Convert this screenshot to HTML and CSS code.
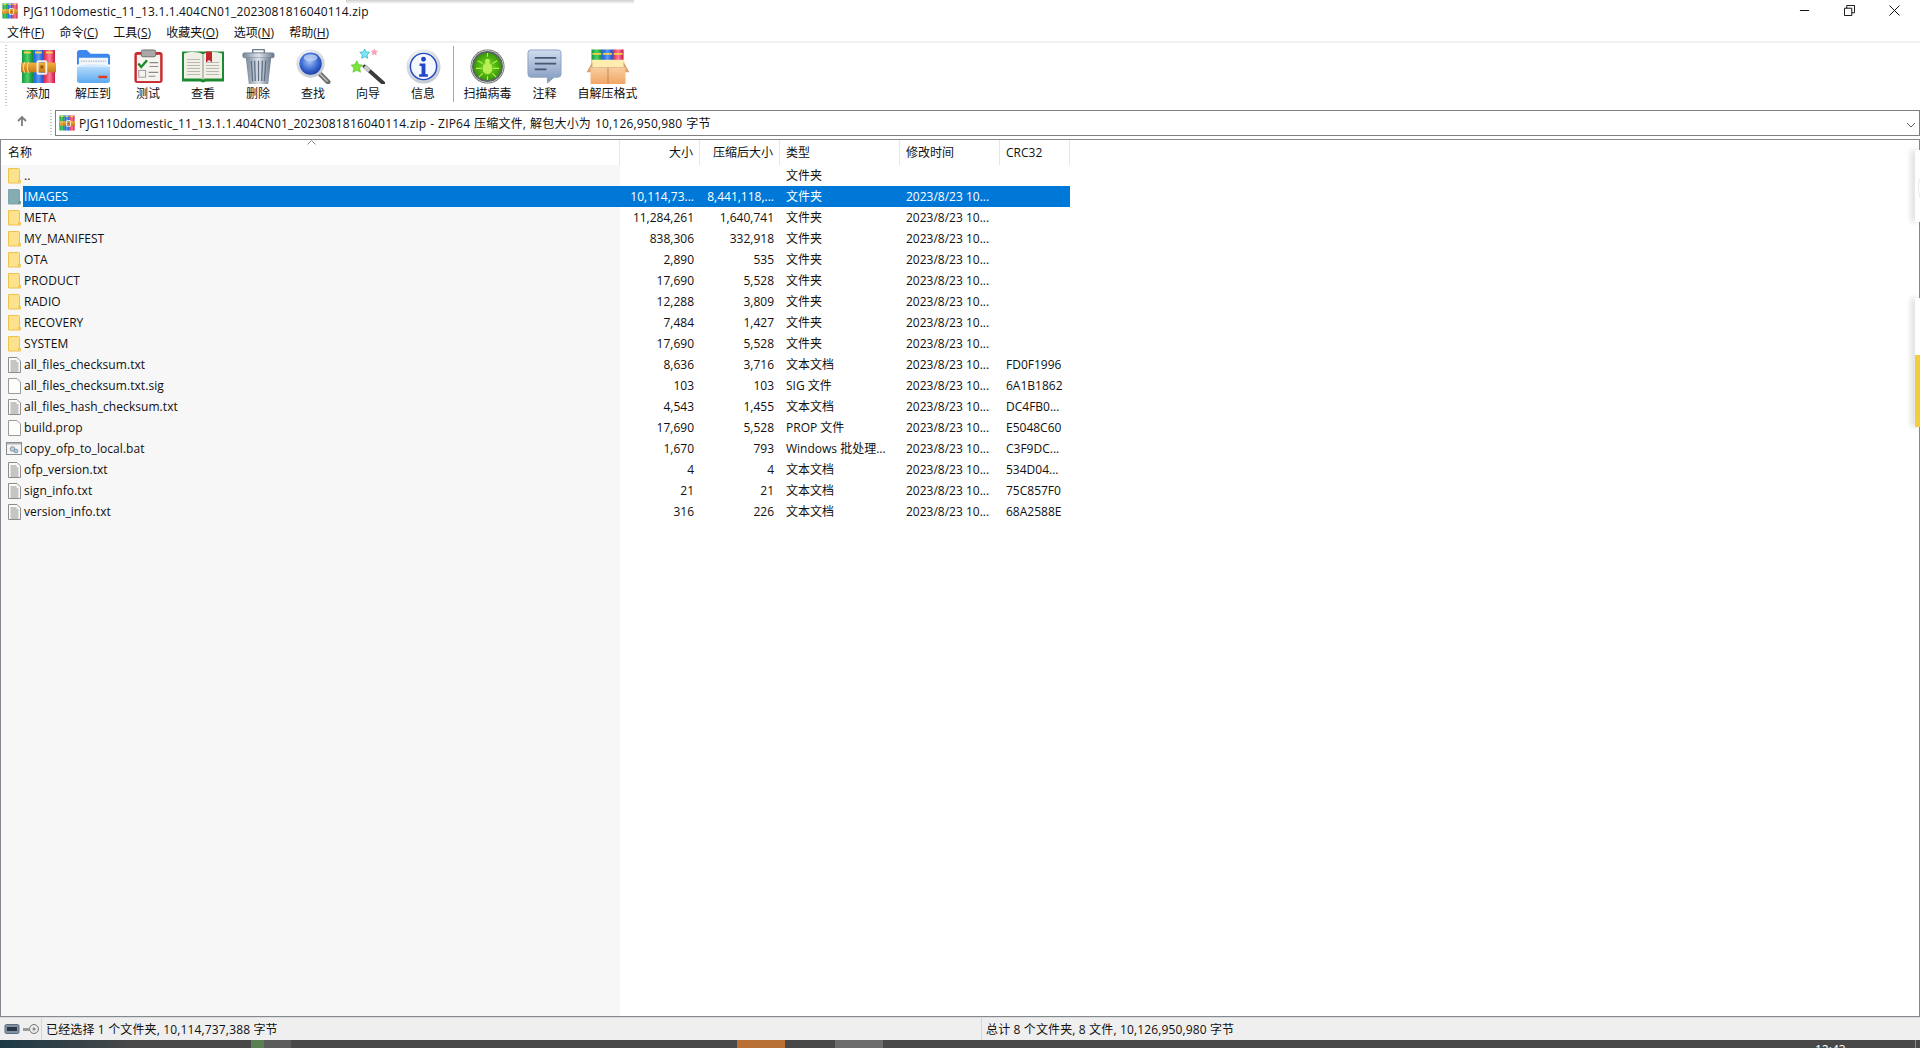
FILE: index.html
```html
<!DOCTYPE html>
<html lang="zh">
<head>
<meta charset="utf-8">
<title>PJG110domestic_11_13.1.1.404CN01_2023081816040114.zip</title>
<link rel="stylesheet" href="styles.css">
</head>
<body>
<svg class="defs" width="0" height="0" aria-hidden="true">
  <defs>
    <linearGradient id="gGreen" x1="0" x2="1" y1="0" y2="0"><stop offset="0" stop-color="#0f9a3c"/><stop offset=".5" stop-color="#4fd06a"/><stop offset="1" stop-color="#0c8a35"/></linearGradient>
    <linearGradient id="gBlue" x1="0" x2="1" y1="0" y2="0"><stop offset="0" stop-color="#1a55d8"/><stop offset=".5" stop-color="#5d9cf5"/><stop offset="1" stop-color="#1743c0"/></linearGradient>
    <linearGradient id="gRed" x1="0" x2="1" y1="0" y2="0"><stop offset="0" stop-color="#d8204a"/><stop offset=".5" stop-color="#ff7d9a"/><stop offset="1" stop-color="#c61540"/></linearGradient>
    <linearGradient id="gBelt" x1="0" x2="0" y1="0" y2="1"><stop offset="0" stop-color="#f2b13c"/><stop offset="1" stop-color="#c87a18"/></linearGradient>
    <linearGradient id="gFolder" x1="0" x2="0" y1="0" y2="1"><stop offset="0" stop-color="#b6dcfb"/><stop offset="1" stop-color="#5aa9ef"/></linearGradient>
    <linearGradient id="gTrash" x1="0" x2="1" y1="0" y2="0"><stop offset="0" stop-color="#77869a"/><stop offset=".5" stop-color="#dfe5ec"/><stop offset="1" stop-color="#69788c"/></linearGradient>
    <radialGradient id="gLens" cx=".45" cy=".4" r=".6"><stop offset="0" stop-color="#a9c4f2"/><stop offset=".6" stop-color="#3f70d6"/><stop offset="1" stop-color="#1d3fa8"/></radialGradient>
    <radialGradient id="gRing" cx=".4" cy=".3" r=".8"><stop offset="0" stop-color="#ffffff"/><stop offset="1" stop-color="#b9c2cc"/></radialGradient>
    <radialGradient id="gBug" cx=".5" cy=".5" r=".55"><stop offset="0" stop-color="#7fe01f"/><stop offset="1" stop-color="#2f9206"/></radialGradient>
    <linearGradient id="gNote" x1="0" x2="0" y1="0" y2="1"><stop offset="0" stop-color="#cfdcee"/><stop offset="1" stop-color="#7f97bd"/></linearGradient>
    <linearGradient id="gBox" x1="0" x2="0" y1="0" y2="1"><stop offset="0" stop-color="#f7cf9f"/><stop offset="1" stop-color="#f2a567"/></linearGradient>

    <symbol id="i-rar" viewBox="0 0 36 36">
      <rect x="1" y="1" width="11.5" height="34" fill="url(#gGreen)"/>
      <rect x="12.5" y="1" width="11" height="34" fill="url(#gBlue)"/>
      <rect x="23.5" y="1" width="11.5" height="34" fill="url(#gRed)"/>
      <path d="M3 2.500h7v2H3zM14.500 2.500h7v2h-7zM25.500 2.500h7v2h-7z" fill="#f4d443"/>
      <rect x="0" y="14" width="36" height="10" fill="url(#gBelt)"/>
      <path d="M4 13.500c-2 3-2 8 0 11M8 13.500c-2 3-2 8 0 11" fill="none" stroke="#fbe6a6" stroke-width="1"/>
      <rect x="17" y="12.500" width="9" height="13" rx="1" fill="none" stroke="#f4f1e4" stroke-width="2"/>
      <rect x="20" y="17" width="3" height="3" fill="#8a5612"/>
    </symbol>

    <symbol id="i-extract" viewBox="0 0 36 36">
      <path d="M1 4a3 3 0 0 1 3-3h7l4 4h17a3 3 0 0 1 3 3v8H1z" fill="#3c86ee"/>
      <rect x="3" y="9" width="30" height="12" fill="#f3f6fa"/>
      <path d="M5 12.500h26" stroke="#b8c2cf" stroke-width="1.500" stroke-dasharray="1.500 1"/>
      <path d="M1 18h34v14a3 3 0 0 1-3 3H4a3 3 0 0 1-3-3z" fill="url(#gFolder)"/>
      <path d="M1 18c8-3 26-3 34 0" fill="#d3ebfd"/>
      <rect x="23" y="27.500" width="9" height="2.500" fill="#e03a20"/>
    </symbol>

    <symbol id="i-test" viewBox="0 0 36 36">
      <rect x="3.500" y="3" width="29" height="32" rx="3" fill="#c9282c"/>
      <rect x="6" y="6" width="24" height="27" fill="#f6f4ef"/>
      <rect x="10.500" y="1" width="15" height="7" rx="2" fill="#a9a9a9" stroke="#6d6d6d"/>
      <path d="M7.500 15l3 3.500 6-7" fill="none" stroke="#1c8a2d" stroke-width="2.500"/>
      <path d="M19 14h9M19 18h9M18 24h10M18 28h7" stroke="#8b8b8b" stroke-width="1.200"/>
      <rect x="8" y="22" width="7" height="7" fill="none" stroke="#9a9a9a"/>
    </symbol>

    <symbol id="i-view" viewBox="0 0 42 32">
      <path d="M0 1h42v30H24l-3 1-3-1H0z" fill="#1c8a32"/>
      <path d="M2 3c7-2 14-2 19 1 5-3 12-3 19-1v25H23l-2 1-2-1H2z" fill="#f1f0e7"/>
      <path d="M5 9h13M5 12h13M5 15h13M5 18h13M5 21h13M5 24h13M24 12h13M24 15h13M24 18h13M24 21h13M24 24h13" stroke="#b9b9b1" stroke-width="1.200"/>
      <path d="M21 4v25" stroke="#8f8f85" stroke-width="1"/>
      <path d="M24 1h6v11l-3-2.500-3 2.500z" fill="#c4242c"/>
    </symbol>

    <symbol id="i-del" viewBox="0 0 36 36">
      <rect x="12" y="0.500" width="12" height="4" rx="1" fill="none" stroke="#6c7a8d" stroke-width="1.500"/>
      <rect x="2" y="4" width="32" height="5" rx="1.500" fill="url(#gTrash)" stroke="#66758a" stroke-width=".8"/>
      <path d="M5 9h26l-3 27H8z" fill="url(#gTrash)"/>
      <path d="M10.500 12l1.500 21M18 12v21M25.500 12L24 33M14 12l.7 21M22 12l-.7 21" stroke="#5f6e83" stroke-width="1.300"/>
    </symbol>

    <symbol id="i-find" viewBox="0 0 36 36">
      <path d="M23 24l10 10" stroke="#6f6f6f" stroke-width="5" stroke-linecap="round"/>
      <path d="M25 26l7 7" stroke="#c4c4c4" stroke-width="1.500" stroke-linecap="round"/>
      <circle cx="15" cy="15" r="14.500" fill="url(#gRing)"/>
      <circle cx="15" cy="15" r="11.500" fill="url(#gLens)"/>
      <ellipse cx="15" cy="9" rx="7" ry="3.500" fill="#c7d9f7" opacity=".7"/>
    </symbol>

    <symbol id="i-wizard" viewBox="0 0 36 36">
      <path d="M14 18l19 17" stroke="#3b3b3b" stroke-width="4" stroke-linecap="round"/>
      <path d="M14 18l5 4.500" stroke="#c9c9c9" stroke-width="4"/>
      <path d="M6 12l2 4 4 .5-3 3 .8 4.500L6 22l-4 2 .8-4.500-3-3 4-.5z" fill="#7be33a" stroke="#4bb81c" stroke-width=".5"/>
      <path d="M14 0l1.500 3 3.500.5-2.500 2.500.6 3.500L14 8l-3 1.500.6-3.500L9 3.500 12.500 3z" fill="#7be6f5" stroke="#2fb6d2" stroke-width=".8"/>
      <path d="M24 0l1 2 2.300.3-1.700 1.600.4 2.300L24 5l-2 1.200.4-2.300L20.700 2.300 23 2z" fill="#f7a6b8" stroke="#e886a0" stroke-width=".4"/>
    </symbol>

    <symbol id="i-info" viewBox="0 0 36 36">
      <circle cx="18" cy="18" r="17.500" fill="url(#gRing)"/>
      <circle cx="18" cy="18" r="13.500" fill="#f5f8fd" stroke="#2446bf" stroke-width="1.500"/>
      <circle cx="18" cy="10.500" r="2.500" fill="#2246c8"/>
      <path d="M14 15h6v11h2.500v2.500h-9V26H16v-8.500h-2z" fill="#2246c8"/>
    </symbol>

    <symbol id="i-scan" viewBox="0 0 36 36">
      <circle cx="18" cy="18" r="17.500" fill="#5d6360"/>
      <circle cx="18" cy="18" r="16.500" fill="none" stroke="#cfd3d0" stroke-width="1"/>
      <circle cx="18" cy="18" r="14" fill="url(#gBug)"/>
      <ellipse cx="18" cy="20" rx="5" ry="6" fill="#b8ef56"/>
      <circle cx="18" cy="12.500" r="2.500" fill="#b8ef56"/>
      <path d="M13 15l-5-3M23 15l5-3M12 20H6M24 20h6M13 25l-4 4M23 25l4 4M18 4v4M18 28v4" stroke="#b8ef56" stroke-width="1.200"/>
    </symbol>

    <symbol id="i-note" viewBox="0 0 36 36">
      <path d="M4 1h28a3 3 0 0 1 3 3v22a3 3 0 0 1-3 3h-4l-7 6v-6H4a3 3 0 0 1-3-3V4a3 3 0 0 1 3-3z" fill="url(#gNote)" stroke="#8ea2c2"/>
      <path d="M8 9h22M8 15h22M8 21h12" stroke="#47556e" stroke-width="1.800"/>
    </symbol>

    <symbol id="i-sfx" viewBox="0 0 44 36">
      <rect x="5" y="0.500" width="11" height="19" fill="url(#gGreen)"/>
      <rect x="16" y="0.500" width="11" height="19" fill="url(#gBlue)"/>
      <rect x="27" y="0.500" width="11" height="19" fill="url(#gRed)"/>
      <path d="M6 4h9v2H6zM17 4h9v2h-9zM28 4h9v2h-9z" fill="#f4d443"/>
      <path d="M5 11h34v8H5z" fill="#fdeeb0"/>
      <path d="M0 24l6-11v6h32v-6l6 11z" fill="#d9a06c"/>
      <rect x="4" y="19" width="36" height="17" fill="url(#gBox)"/>
      <path d="M22 19v17" stroke="#c98548" stroke-width="1"/>
    </symbol>

    <symbol id="i-folder" viewBox="0 0 13 16">
      <path d="M.5.500h10a1 1 0 0 1 1 1v11h1v2.500h-12z" fill="#fde28e" stroke="#eec24d"/>
      <path d="M10 15v-3l2.500 0v3z" fill="#f1cb62"/>
    </symbol>
    <symbol id="i-folder-sel" viewBox="0 0 13 16">
      <path d="M.5.500h10a1 1 0 0 1 1 1v11h1v2.500h-12z" fill="#85acb2" stroke="#7ea6ac"/>
      <path d="M10 15v-3l2.500 0v3z" fill="#6f9c8c"/>
    </symbol>
    <symbol id="i-txt" viewBox="0 0 13 16">
      <path d="M.5.500h8.500l3.500 3.500v11.500h-12z" fill="#fbfbfb" stroke="#8d8d8d"/>
      <path d="M2.500 4h6M2.500 6h8M2.500 8h8M2.500 10h8M2.500 12h8M2.500 14h8" stroke="#8f8f8f" stroke-width="1"/>
    </symbol>
    <symbol id="i-blank" viewBox="0 0 13 16">
      <path d="M.5.500h8.500l3.500 3.500v11.500h-12z" fill="#fdfdfd" stroke="#9a9a9a"/>
    </symbol>
    <symbol id="i-bat" viewBox="0 0 16 13">
      <rect x=".5" y=".5" width="15" height="12" fill="#f4f4f4" stroke="#8b8b8b"/>
      <rect x="1" y="1" width="14" height="1.500" fill="#b5b5b5"/>
      <circle cx="6.500" cy="7" r="2.300" fill="#c4ccd4" stroke="#8a949e"/>
      <circle cx="10" cy="9" r="1.800" fill="#a8cde6" stroke="#6f9cbc"/>
    </symbol>
  </defs>
</svg>

<div class="window">
  <div class="shadow-strip"></div>
  <header class="titlebar">
    <svg class="ico16"><use href="#i-rar"/></svg>
    <span class="title">PJG110domestic_11_13.1.1.404CN01_2023081816040114.zip</span>
    <div class="winbtns">
      <svg class="wb" viewBox="0 0 12 12"><path d="M1 6h10" stroke="#000"/></svg>
      <svg class="wb" viewBox="0 0 12 12"><path d="M.5 3.500h8v8h-8zM3 3.500V.5h8.500v8H8.500" fill="none" stroke="#000"/></svg>
      <svg class="wb" viewBox="0 0 12 12"><path d="M.5.500l11 11M11.500.500l-11 11" stroke="#000"/></svg>
    </div>
  </header>

  <nav class="menubar">
    <span>文件(<u>F</u>)</span><span>命令(<u>C</u>)</span><span>工具(<u>S</u>)</span><span>收藏夹(<u>O</u>)</span><span>选项(<u>N</u>)</span><span>帮助(<u>H</u>)</span>
  </nav>

  <div class="toolbar">
    <div class="grip"></div>
    <div class="tool"><svg class="ticon"><use href="#i-rar"/></svg><span>添加</span></div>
    <div class="tool"><svg class="ticon"><use href="#i-extract"/></svg><span>解压到</span></div>
    <div class="tool"><svg class="ticon"><use href="#i-test"/></svg><span>测试</span></div>
    <div class="tool"><svg class="ticon wide"><use href="#i-view"/></svg><span>查看</span></div>
    <div class="tool"><svg class="ticon"><use href="#i-del"/></svg><span>删除</span></div>
    <div class="tool"><svg class="ticon"><use href="#i-find"/></svg><span>查找</span></div>
    <div class="tool"><svg class="ticon"><use href="#i-wizard"/></svg><span>向导</span></div>
    <div class="tool"><svg class="ticon"><use href="#i-info"/></svg><span>信息</span></div>
    <div class="tsep"></div>
    <div class="tool w-scan"><svg class="ticon"><use href="#i-scan"/></svg><span>扫描病毒</span></div>
    <div class="tool w-note"><svg class="ticon"><use href="#i-note"/></svg><span>注释</span></div>
    <div class="tool w-sfx"><svg class="ticon wider"><use href="#i-sfx"/></svg><span>自解压格式</span></div>
  </div>

  <div class="addrrow">
    <svg class="up" viewBox="0 0 12 12"><path d="M6 11V2M2 6l4-4 4 4" fill="none" stroke="#7d7d7d" stroke-width="1.800"/></svg>
    <div class="grip small"></div>
    <div class="addr">
      <svg class="ico16"><use href="#i-rar"/></svg>
      <span class="addrtext">PJG110domestic_11_13.1.1.404CN01_2023081816040114.zip - ZIP64 压缩文件, 解包大小为 10,126,950,980 字节</span>
      <svg class="chev" viewBox="0 0 10 6"><path d="M1 1l4 4 4-4" fill="none" stroke="#606060"/></svg>
    </div>
  </div>

  <main class="list">
    <div class="row head">
      <div class="c-name">名称<svg class="sort" viewBox="0 0 9 5"><path d="M.5 4.500L4.500.5l4 4" fill="none" stroke="#8a8a8a"/></svg></div>
      <div class="c r">大小</div>
      <div class="c r">压缩后大小</div>
      <div class="c">类型</div>
      <div class="c">修改时间</div>
      <div class="c">CRC32</div>
    </div>
    <div class="rows">
      <div class="row"><svg class="fi"><use href="#i-folder"/></svg><div class="nm">..</div><div class="c r"></div><div class="c r"></div><div class="c">文件夹</div><div class="c"></div><div class="c"></div></div>
      <div class="row sel"><svg class="fi"><use href="#i-folder-sel"/></svg><div class="nm">IMAGES</div><div class="c r">10,114,73...</div><div class="c r">8,441,118,...</div><div class="c">文件夹</div><div class="c">2023/8/23 10...</div><div class="c"></div></div>
      <div class="row"><svg class="fi"><use href="#i-folder"/></svg><div class="nm">META</div><div class="c r">11,284,261</div><div class="c r">1,640,741</div><div class="c">文件夹</div><div class="c">2023/8/23 10...</div><div class="c"></div></div>
      <div class="row"><svg class="fi"><use href="#i-folder"/></svg><div class="nm">MY_MANIFEST</div><div class="c r">838,306</div><div class="c r">332,918</div><div class="c">文件夹</div><div class="c">2023/8/23 10...</div><div class="c"></div></div>
      <div class="row"><svg class="fi"><use href="#i-folder"/></svg><div class="nm">OTA</div><div class="c r">2,890</div><div class="c r">535</div><div class="c">文件夹</div><div class="c">2023/8/23 10...</div><div class="c"></div></div>
      <div class="row"><svg class="fi"><use href="#i-folder"/></svg><div class="nm">PRODUCT</div><div class="c r">17,690</div><div class="c r">5,528</div><div class="c">文件夹</div><div class="c">2023/8/23 10...</div><div class="c"></div></div>
      <div class="row"><svg class="fi"><use href="#i-folder"/></svg><div class="nm">RADIO</div><div class="c r">12,288</div><div class="c r">3,809</div><div class="c">文件夹</div><div class="c">2023/8/23 10...</div><div class="c"></div></div>
      <div class="row"><svg class="fi"><use href="#i-folder"/></svg><div class="nm">RECOVERY</div><div class="c r">7,484</div><div class="c r">1,427</div><div class="c">文件夹</div><div class="c">2023/8/23 10...</div><div class="c"></div></div>
      <div class="row"><svg class="fi"><use href="#i-folder"/></svg><div class="nm">SYSTEM</div><div class="c r">17,690</div><div class="c r">5,528</div><div class="c">文件夹</div><div class="c">2023/8/23 10...</div><div class="c"></div></div>
      <div class="row"><svg class="fi"><use href="#i-txt"/></svg><div class="nm">all_files_checksum.txt</div><div class="c r">8,636</div><div class="c r">3,716</div><div class="c">文本文档</div><div class="c">2023/8/23 10...</div><div class="c">FD0F1996</div></div>
      <div class="row"><svg class="fi"><use href="#i-blank"/></svg><div class="nm">all_files_checksum.txt.sig</div><div class="c r">103</div><div class="c r">103</div><div class="c">SIG 文件</div><div class="c">2023/8/23 10...</div><div class="c">6A1B1862</div></div>
      <div class="row"><svg class="fi"><use href="#i-txt"/></svg><div class="nm">all_files_hash_checksum.txt</div><div class="c r">4,543</div><div class="c r">1,455</div><div class="c">文本文档</div><div class="c">2023/8/23 10...</div><div class="c">DC4FB0...</div></div>
      <div class="row"><svg class="fi"><use href="#i-blank"/></svg><div class="nm">build.prop</div><div class="c r">17,690</div><div class="c r">5,528</div><div class="c">PROP 文件</div><div class="c">2023/8/23 10...</div><div class="c">E5048C60</div></div>
      <div class="row"><svg class="fi bat"><use href="#i-bat"/></svg><div class="nm">copy_ofp_to_local.bat</div><div class="c r">1,670</div><div class="c r">793</div><div class="c">Windows 批处理...</div><div class="c">2023/8/23 10...</div><div class="c">C3F9DC...</div></div>
      <div class="row"><svg class="fi"><use href="#i-txt"/></svg><div class="nm">ofp_version.txt</div><div class="c r">4</div><div class="c r">4</div><div class="c">文本文档</div><div class="c">2023/8/23 10...</div><div class="c">534D04...</div></div>
      <div class="row"><svg class="fi"><use href="#i-txt"/></svg><div class="nm">sign_info.txt</div><div class="c r">21</div><div class="c r">21</div><div class="c">文本文档</div><div class="c">2023/8/23 10...</div><div class="c">75C857F0</div></div>
      <div class="row"><svg class="fi"><use href="#i-txt"/></svg><div class="nm">version_info.txt</div><div class="c r">316</div><div class="c r">226</div><div class="c">文本文档</div><div class="c">2023/8/23 10...</div><div class="c">68A2588E</div></div>
    </div>
    <div class="edge-tab one"><div class="ring"></div></div>
    <div class="edge-tab two"><div class="yellow"></div></div>
  </main>

  <footer class="status">
    <div class="st-icons">
      <svg class="st-i" viewBox="0 0 16 12"><rect x="1" y="1.500" width="14" height="9" rx="1.500" fill="#7f93a8" stroke="#5e6d7c"/><rect x="3" y="4" width="10" height="4" fill="#2d3640"/></svg>
      <svg class="st-i" viewBox="0 0 16 12"><circle cx="11" cy="6" r="4.500" fill="#e8e8e8" stroke="#777"/><circle cx="11" cy="6" r="1.500" fill="#8a8a8a"/><path d="M0 5h7v3H0z" fill="#9a9a9a"/></svg>
    </div>
    <div class="st-left">已经选择 1 个文件夹, 10,114,737,388 字节</div>
    <div class="st-right">总计 8 个文件夹, 8 文件, 10,126,950,980 字节</div>
  </footer>

  <div class="taskbar">
    <span class="tb tb-glow"></span>
    <span class="tb tb-green"></span>
    <span class="tb tb-lite"></span>
    <span class="tb tb-orange"></span>
    <span class="tb tb-gray"></span>
    <span class="clock">12:43</span>
    <span class="tb tb-edge"></span>
  </div>
</div>
</body>
</html>
```

FILE: styles.css
```css
* { box-sizing: border-box; }
html, body { margin: 0; height: 100%; overflow: hidden; }
body {
  font-family: "Open Sans", "Noto Sans CJK SC", sans-serif;
  font-size: 12px;
  color: #101010;
  background: #fff;
}
.defs { position: absolute; }
.window { display: flex; flex-direction: column; height: 1048px; position: relative; }

.shadow-strip {
  position: absolute; left: 346px; top: 0; width: 288px; height: 4px;
  background: linear-gradient(#cfcfcf, #fff);
}

.titlebar { height: 22px; display: flex; align-items: center; padding-left: 2px; flex: none; }
.ico16 { width: 16px; height: 16px; flex: none; }
.title { margin-left: 5px; letter-spacing: .16px; }
.winbtns { margin-left: auto; display: flex; gap: 34px; padding-right: 20px; }
.wb { width: 11px; height: 11px; margin-bottom: 2px; }

.menubar { height: 19px; display: flex; gap: 15.2px; padding-left: 7px; align-items: center; flex: none; }
.menubar u { text-decoration: underline; }

.toolbar {
  height: 69px; flex: none; display: flex; align-items: flex-start; padding-left: 5px;
  border-top: 2px solid #f0f0f0; position: relative;
}
.grip { width: 2px; height: 62px; margin: 2px 3.5px 0 0; flex: none;
  background: repeating-linear-gradient(#c4c4c4 0 1px, transparent 1px 3px); }
.grip.small { height: 25px; margin: 0 3px 0 0; }
.tool { width: 55px; flex: none; display: flex; flex-direction: column; align-items: center; padding-top: 6px; }
.tool span { margin-top: 1px; line-height: 18px; white-space: nowrap; }
.ticon { width: 35px; height: 35px; display: block; }
.ticon.wide { width: 42px; }
.ticon.wider { width: 44px; }
.tsep { width: 1px; height: 56px; background: #a8a8a8; margin: 3px 1px 0 2px; flex: none; }
.w-scan { width: 66px; }
.w-note { width: 48px; }
.w-sfx { width: 78px; }

.addrrow { height: 28px; display: flex; align-items: flex-start; flex: none; padding-left: 16px; }
.up { width: 12px; height: 12px; margin: 5px 22px 0 0; flex: none; }
.addr { flex: 1; height: 26px; border: 1px solid #808080; display: flex; align-items: center; padding-left: 3px; }
.addrtext { margin-left: 4px; letter-spacing: .19px; word-spacing: .6px; }
.chev { width: 10px; height: 6px; margin-left: auto; margin-right: 3px; margin-top: 3px; }

.list {
  flex: 1; min-height: 0; display: flex; flex-direction: column; position: relative;
  border: 1px solid #84888f;
  margin-top: 1px;
}
.row {
  display: grid; grid-template-columns: 22px 597px 80px 80px 120px 100px 70px;
  height: 21px; align-items: center; width: 1068px; white-space: nowrap;
}
.row.head { height: 25px; grid-template-columns: 619px 80px 80px 120px 100px 70px; }
.head > div { height: 100%; display: flex; align-items: center; padding-bottom: 1px; border-right: 1px solid #e6e6e6; }
.head .r { justify-content: flex-end; }
.c-name { padding-left: 7px; position: relative; }
.sort { position: absolute; left: 306px; top: 0; width: 9px; height: 5px; }
.rows { flex: 1; background: linear-gradient(to right, #f7f7f7 619px, #fff 619px); }
.c { height: 100%; line-height: 21px; padding: 0 6px; overflow: hidden; }
.head .c { line-height: normal; }
.r { text-align: right; }
.nm { height: 100%; line-height: 21px; padding-left: 1px; letter-spacing: .06px; }
.fi { width: 13px; height: 16px; margin-left: 7px; }
.fi.bat { width: 16px; height: 13px; margin-left: 5px; }
.sel .nm, .sel .c { background: #0078d7; color: #fff; }

.edge-tab { position: absolute; right: -1px; width: 5px; background: #fff; box-shadow: -3px 0 6px rgba(0,0,0,.18); }
.edge-tab.one { top: 10px; height: 72px; overflow: hidden; }
.edge-tab.two { top: 158px; height: 129px; }
.ring { width: 10px; height: 26px; margin: 25px 0 0 3px; border: 1px solid #e8e8e8; border-radius: 50%; }
.yellow { position: absolute; left: 0; right: 0; top: 57px; bottom: 0; background: #f5cc3e; }

.status {
  height: 23px; flex: none; display: flex; align-items: center; background: #efefef;
  border-top: 1px solid #dcdcdc; margin-top: 0;
}
.st-icons { display: flex; gap: 3px; width: 42px; padding-left: 4px; height: 100%; align-items: center; border-right: 1px solid #d4d4d4; flex: none; }
.st-i { width: 16px; height: 12px; flex: none; }
.st-left { width: 939px; padding-left: 4px; flex: none; letter-spacing: .15px; }
.st-right { height: 100%; display: flex; align-items: center; border-left: 1px solid #d8d8d8; padding-left: 4px; letter-spacing: .14px; }

.taskbar { height: 8px; flex: none; background: #484848; position: relative; overflow: hidden; }
.tb { position: absolute; top: 0; height: 8px; }
.tb-glow { left: 0; width: 130px; background: linear-gradient(to right, #1d3a44, #484848); }
.tb-green { left: 251px; width: 13px; background: #5a7f50; }
.tb-lite { left: 264px; width: 27px; background: #5c5c5c; }
.tb-orange { left: 737px; width: 48px; background: #b87035; }
.tb-gray { left: 835px; width: 48px; background: #6c6c6c; }
.tb-edge { left: 1915px; width: 1px; background: #8a8a8a; }
.clock { position: absolute; left: 1815px; top: 2px; color: #fff; font-size: 12px; line-height: 16px; }
```
